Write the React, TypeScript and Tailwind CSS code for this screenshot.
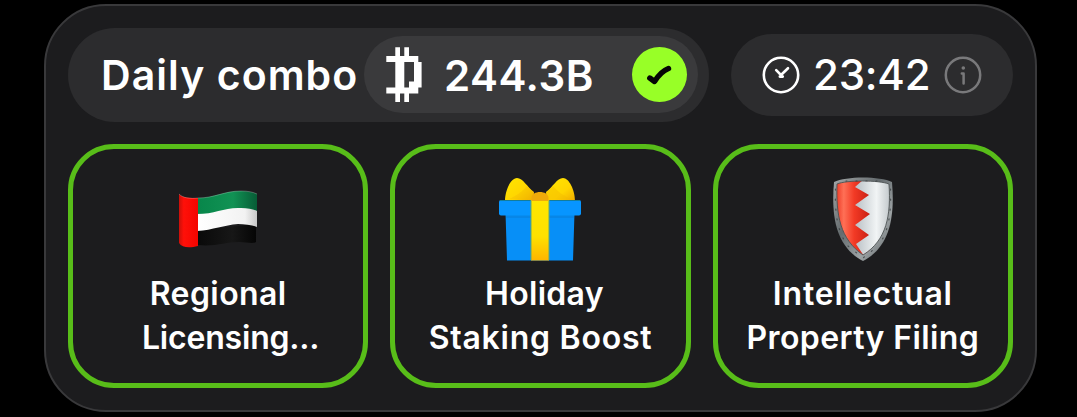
import type { ReactNode } from 'react'

interface ComboCard { icon: ReactNode; lines: { text: string; className: string }[] }

function CoinIcon() {
  return (
    <svg className="w-9 h-[55px] shrink-0" viewBox="0 0 36 55" fill="#fff">
      <path
        fillRule="evenodd"
        d="M9.3 0.3H14V9H18.3V0.3H23V9H32.3V15H35.6V40.5H32.3V46.5H23V55H18.3V46.5H14V55H9.3V46.5H0.3V40.5H9.3V15H0.3V9H9.3ZM18.3 15V40.5H23V34.5H28V15Z"
      />
    </svg>
  )
}

function CheckBadge() {
  return (
    <div className="w-[55px] h-[55px] rounded-full bg-[#98ff27] flex items-center justify-center shrink-0">
      <svg className="w-[55px] h-[55px]" viewBox="0 0 55 55" fill="none" stroke="#050505" strokeWidth="5.4" strokeLinecap="round" strokeLinejoin="round">
        <path d="M17.8 31L22.5 34.5C26 29 30 24 36.5 21.5" />
      </svg>
    </div>
  )
}

function ClockIcon() {
  return (
    <svg className="w-[38px] h-[38px] shrink-0" viewBox="0 0 38 38" fill="none" stroke="#fff" strokeWidth="2.6" strokeLinecap="round" strokeLinejoin="round">
      <circle cx="19" cy="19" r="17.2" />
      <path d="M14.2 14.2L19 19L26 12.2M17.8 20.6H20.8" />
    </svg>
  )
}

function InfoIcon() {
  return (
    <svg className="w-[38px] h-[38px] shrink-0" viewBox="0 0 38 38" fill="none" stroke="#79797b" strokeWidth="2.5" strokeLinecap="round" strokeLinejoin="round">
      <circle cx="19" cy="19" r="17.2" />
      <path d="M17.8 17.6H19.6V27.6" />
      <circle cx="19.3" cy="12" r="1.8" fill="#79797b" stroke="none" />
    </svg>
  )
}

function FlagIcon() {
  return (
    <svg className="w-[84px] h-[84px]" viewBox="0 0 84 84">
      <defs>
        <linearGradient id="flag-red" x2="1" y2="0">
          <stop offset="0" stopColor="#c9100a" />
          <stop offset="0.25" stopColor="#ff1009" />
          <stop offset="1" stopColor="#f40500" />
        </linearGradient>
        <linearGradient id="flag-green" x2="1" y2="0">
          <stop offset="0" stopColor="#07864a" />
          <stop offset="0.6" stopColor="#119254" />
          <stop offset="1" stopColor="#075c36" />
        </linearGradient>
        <linearGradient id="flag-white" x2="1" y2="0">
          <stop offset="0" stopColor="#fff" />
          <stop offset="0.8" stopColor="#f2f2f2" />
          <stop offset="1" stopColor="#c8c8c8" />
        </linearGradient>
        <linearGradient id="flag-black" x2="1" y2="0">
          <stop offset="0" stopColor="#090909" />
          <stop offset="0.6" stopColor="#171717" />
          <stop offset="1" stopColor="#050505" />
        </linearGradient>
      </defs>
      <path d="M21 21C38 21 47 14 65 14C72 14 77 15 81 17V35L50 38L21 39Z" fill="url(#flag-green)" />
      <path d="M21 53V68C40 70 49 65 63 65C70 65 77 67 80 65V47Z" fill="url(#flag-black)" />
      <path d="M21 37C39 37 49 30 65 31C72 31 77 32 81 34V50C76 48 69 47 62 47C48 48 37 53 21 54Z" fill="url(#flag-white)" />
      <path d="M3 17C6 21 14 21 22 21V69C14 71 6 71 3 66Z" fill="url(#flag-red)" />
      <path d="M3 17C7 21 14 22 22 21C39 21 48 14 65 14C72 14 77 15 81 17" fill="none" stroke="#fff" strokeOpacity="0.25" />
    </svg>
  )
}

function GiftIcon() {
  return (
    <svg className="w-[84px] h-[84px]" viewBox="0 0 84 84">
      <defs>
        <linearGradient id="bow" x2="1" y2="1">
          <stop offset="0" stopColor="#ffe600" />
          <stop offset="0.6" stopColor="#ffd500" />
          <stop offset="1" stopColor="#efaa00" />
        </linearGradient>
        <linearGradient id="ribbon" x2="0" y2="1">
          <stop offset="0" stopColor="#ffe600" />
          <stop offset="0.6" stopColor="#ffe100" />
          <stop offset="1" stopColor="#ffb500" />
        </linearGradient>
      </defs>
      <path d="M7 24C7 13 13 1 19 1C25 1 29 10 36 15L35 24Z" fill="url(#bow)" />
      <path d="M77 24C77 13 71 1 65 1C59 1 55 10 48 15L49 24Z" fill="url(#bow)" />
      <path d="M11 22C16 20 23 16 29 9L36 16L34 23ZM73 22C68 20 61 16 55 9L48 16L50 23Z" fill="#f3b900" fillOpacity="0.4" />
      <path d="M7.500 36H76.500L75 83.500H9Z" fill="#078ff7" />
      <path d="M8 38H76V41H8Z" fill="#0878cf" fillOpacity="0.4" />
      <rect x="1" y="23" width="82" height="15.500" rx="2" fill="#0795ff" />
      <path d="M2 23.500H82" stroke="#137d9b" />
      <path d="M33 23H51V83.500H33Z" fill="url(#ribbon)" />
      <path d="M33 23V83M51 23V83" stroke="#68a66a" />
      <path d="M33.500 24V21C33.500 13 50.500 13 50.500 21V24Z" fill="#efaa0a" />
    </svg>
  )
}

function ShieldIcon() {
  return (
    <svg className="w-[84px] h-[84px] ml-0.5" viewBox="0 0 84 84">
      <defs>
        <linearGradient id="shield-rim" x2="1" y2="1">
          <stop offset="0" stopColor="#a4a8a9" />
          <stop offset="0.4" stopColor="#646b6e" />
          <stop offset="0.7" stopColor="#9da3a5" />
          <stop offset="1" stopColor="#555b5e" />
        </linearGradient>
        <linearGradient id="shield-red" x2="1" y2="0">
          <stop offset="0" stopColor="#e9301d" />
          <stop offset="0.25" stopColor="#ff7056" />
          <stop offset="0.55" stopColor="#f23a25" />
          <stop offset="1" stopColor="#c91f13" />
        </linearGradient>
        <linearGradient id="shield-silver" x2="1" y2="0">
          <stop offset="0" stopColor="#b9c0c5" />
          <stop offset="0.55" stopColor="#f1f4f5" />
          <stop offset="1" stopColor="#b4bbbf" />
        </linearGradient>
        <clipPath id="shield-face">
          <path d="M15 7C24 3 57 3 67 7C69 38 65 63 41 78C18 62 14 38 15 7Z" />
        </clipPath>
      </defs>
      <path d="M12 5C24 -1 58 -1 70 5C73 40 68 70 41 84C14 70 9 40 12 5Z" fill="url(#shield-rim)" />
      <g clipPath="url(#shield-face)">
        <path d="M13 2H48V82H13Z" fill="url(#shield-red)" />
        <path d="M42 2L33 10L47 18L33 28L48 37L33 48L47 58L34 67L42 79H72V2Z" fill="url(#shield-silver)" />
      </g>
      <path d="M15 7C24 3 57 3 67 7C69 38 65 63 41 78C18 62 14 38 15 7Z" fill="none" stroke="#4d5254" strokeWidth="0.9" />
      <path d="M13.500 12C13 32 14 48 22 63M68.500 12C69 32 68 48 60 63M26 69L41 81L56 69M24 4L57 4" fill="none" stroke="#303436" strokeOpacity="0.7" strokeWidth="1.2" strokeDasharray="1 9" strokeLinecap="round" />
    </svg>
  )
}

const cards: ComboCard[] = [
  { icon: <FlagIcon />, lines: [{ text: 'Regional', className: 'tracking-[0.4px]' }, { text: 'Licensing...', className: 'tracking-[-0.2px] pl-[25px]' }] },
  { icon: <GiftIcon />, lines: [{ text: 'Holiday', className: 'tracking-[0.3px] pl-[8px]' }, { text: 'Staking Boost', className: 'tracking-[0.75px]' }] },
  { icon: <ShieldIcon />, lines: [{ text: 'Intellectual', className: 'tracking-[0.8px]' }, { text: 'Property Filing', className: 'tracking-[0.4px]' }] },
]

export default function App() {
  return (
    <div className="w-[1077px] h-[417px] bg-black pt-1 pl-11 overflow-hidden font-['Inter',sans-serif] text-white">
      <main className="w-[993px] h-[408px] rounded-[62px] border-2 border-[#39393b] bg-[#1c1c1e] px-[22px] pt-[22px]">
        {/* Reward and timer */}
        <header className="flex items-center justify-between">
          <div className="w-[641px] h-[94px] rounded-full bg-[#2c2c2e] flex items-center justify-between pl-[33px] pr-[11px]">
            <h1 className="text-[41px] leading-[50px] font-semibold whitespace-nowrap tracking-[1.05px] w-[263px] shrink-0">Daily combo</h1>
            <div className="w-[334px] h-[77px] mb-px rounded-full bg-[#3a3a3c] flex items-center pl-[22px] pr-[11px] shrink-0">
              <CoinIcon />
              <span className="ml-[22px] mt-0.5 text-[42px] leading-[50px] font-semibold tracking-[0.5px]">244.3B</span>
              <div className="ml-auto"><CheckBadge /></div>
            </div>
          </div>
          <div className="w-[282px] h-[82px] rounded-full bg-[#2c2c2e] flex items-center pl-[31px] pr-[31px]">
            <ClockIcon />
            <span className="ml-[13px] text-[42px] leading-[50px] font-medium tracking-[-0.2px]">23:42</span>
            <div className="ml-auto"><InfoIcon /></div>
          </div>
        </header>

        {/* Combo cards */}
        <section className="mt-[22px] grid grid-cols-3 gap-[22px]">
          {cards.map(card => (
            <article key={card.lines[0].text} className="h-[244px] rounded-[46px] border-[5.5px] border-[#58bd19] flex flex-col items-center pt-[28px]">
              {card.icon}
              <h2 className="mt-[11px] text-[32px] leading-[44px] font-semibold text-center whitespace-nowrap">
                {card.lines.map(line => (
                  <span key={line.text} className={`block ${line.className}`}>{line.text}</span>
                ))}
              </h2>
            </article>
          ))}
        </section>
      </main>
    </div>
  )
}
